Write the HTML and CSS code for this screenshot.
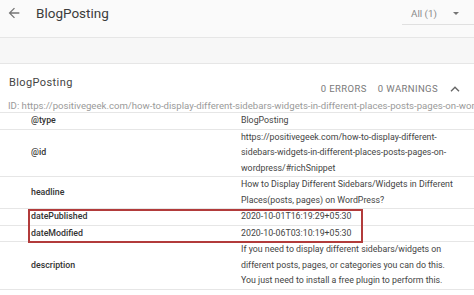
FILE: index.html
```html
<!DOCTYPE html>
<html lang="en">
<head>
  <meta charset="UTF-8">
  <meta name="viewport" content="width=device-width, initial-scale=1.0">
  <title>BlogPosting</title>
  <link rel="stylesheet" href="styles.css">
</head>
<body>

  <!-- Top bar -->
  <header class="topbar">
    <button class="back" type="button" aria-label="Back">
      <svg width="16" height="16" viewBox="0 0 24 24"><path d="M20 11H7.83l5.59-5.59L12 4l-8 8 8 8 1.41-1.41L7.83 13H20v-2z" fill="#757575"/></svg>
    </button>
    <h1 class="title">BlogPosting</h1>
    <div class="filter">
      <span>All (1)</span>
      <svg width="6" height="3" viewBox="0 0 6 3"><path d="M0 0h6L3 3z" fill="#757575"/></svg>
    </div>
  </header>

  <div class="band"></div>

  <!-- Result card -->
  <section class="result">
    <div class="result-head">
      <h2>BlogPosting</h2>
      <div class="counts">
        <span>0 ERRORS</span>
        <span>0 WARNINGS</span>
        <svg width="10" height="6" viewBox="0 0 10 6"><path d="M1 5.2L5 1.3l4 3.9" fill="none" stroke="#666" stroke-width="1.4"/></svg>
      </div>
    </div>
    <div class="result-id">ID: https://positivegeek.com/how-to-display-different-sidebars-widgets-in-different-places-posts-pages-on-wordpress/#richSnippet</div>

    <div class="props">
      <div class="prop">
        <div class="key">@type</div>
        <div class="val">BlogPosting</div>
      </div>
      <div class="prop">
        <div class="key">@id</div>
        <div class="val">https://positivegeek.com/how-to-display-different-sidebars-widgets-in-different-places-posts-pages-on-wordpress/#richSnippet</div>
      </div>
      <div class="prop">
        <div class="key">headline</div>
        <div class="val">How to Display Different Sidebars/Widgets in Different Places(posts, pages) on WordPress?</div>
      </div>
      <div class="prop">
        <div class="key">datePublished</div>
        <div class="val">2020-10-01T16:19:29+05:30</div>
      </div>
      <div class="prop">
        <div class="key">dateModified</div>
        <div class="val">2020-10-06T03:10:19+05:30</div>
      </div>
      <div class="prop">
        <div class="key">description</div>
        <div class="val">If you need to display different sidebars/widgets on different posts, pages, or categories you can do this. You just need to install a free plugin to perform this.</div>
      </div>

      <!-- highlight around the date rows -->
      <div class="highlight"></div>
    </div>
  </section>

</body>
</html>
```

FILE: styles.css
```css
* {
  box-sizing: border-box;
  margin: 0;
  padding: 0;
}
body {
  font-family: Roboto, Arial, sans-serif;
  background-color: #fff;
  color: #333;
  width: 474px;
  height: 295px;
  overflow: hidden;
}
.topbar {
  display: flex;
  align-items: center;
  height: 38px;
  padding-left: 6px;
  background-color: #fafafa;
  border-bottom: 1px solid #e6e6e6;
}
.back {
  display: flex;
  border: none;
  background: none;
  margin-top: -11px;
}
.title {
  margin-left: 14px;
  margin-top: -11px;
  font-size: 13.5px;
  font-weight: 400;
  color: #3c3c3c;
}
.filter {
  display: flex;
  align-items: center;
  align-self: flex-start;
  margin-left: auto;
  margin-top: 2px;
  width: 72px;
  height: 23px;
  padding-left: 9px;
  border-bottom: 1px solid #e0e0e0;
  font-size: 9.8px;
  color: #8a8a8a;
}
.filter svg {
  margin-left: 16px;
}
.band {
  height: 26px;
  background-color: #f7f7f7;
  border-bottom: 1px solid #e6e6e6;
}
.result-head {
  display: flex;
  align-items: flex-start;
  padding: 12px 14px 0 9px;
}
.result-head h2 {
  font-size: 11px;
  line-height: 14px;
  font-weight: 400;
  letter-spacing: 0.4px;
  color: #444;
}
.counts {
  display: flex;
  align-items: center;
  gap: 11px;
  margin-left: auto;
  margin-top: 6px;
  font-size: 9.5px;
  line-height: 14px;
  letter-spacing: 0.4px;
  color: #7a7a7a;
}
.counts svg {
  margin-left: 1px;
}
.result-id {
  margin-top: 4px;
  padding-left: 8px;
  font-size: 9.6px;
  line-height: 12px;
  color: #9a9a9a;
  white-space: nowrap;
  overflow: hidden;
}
.props {
  position: relative;
  border-top: 1px solid #e6e6e6;
}
.prop {
  display: grid;
  grid-template-columns: 239px 1fr;
  border-bottom: 1px solid #e6e6e6;
  font-size: 8.8px;
  line-height: 15.5px;
}
.key {
  align-self: center;
  padding-left: 31px;
  font-weight: 500;
  color: #333;
}
.val {
  padding: 0 16px 0 2px;
  color: #444;
}
.highlight {
  position: absolute;
  top: 96px;
  left: 28px;
  width: 335px;
  height: 34px;
  border: 2px solid #b23b3b;
}
```
